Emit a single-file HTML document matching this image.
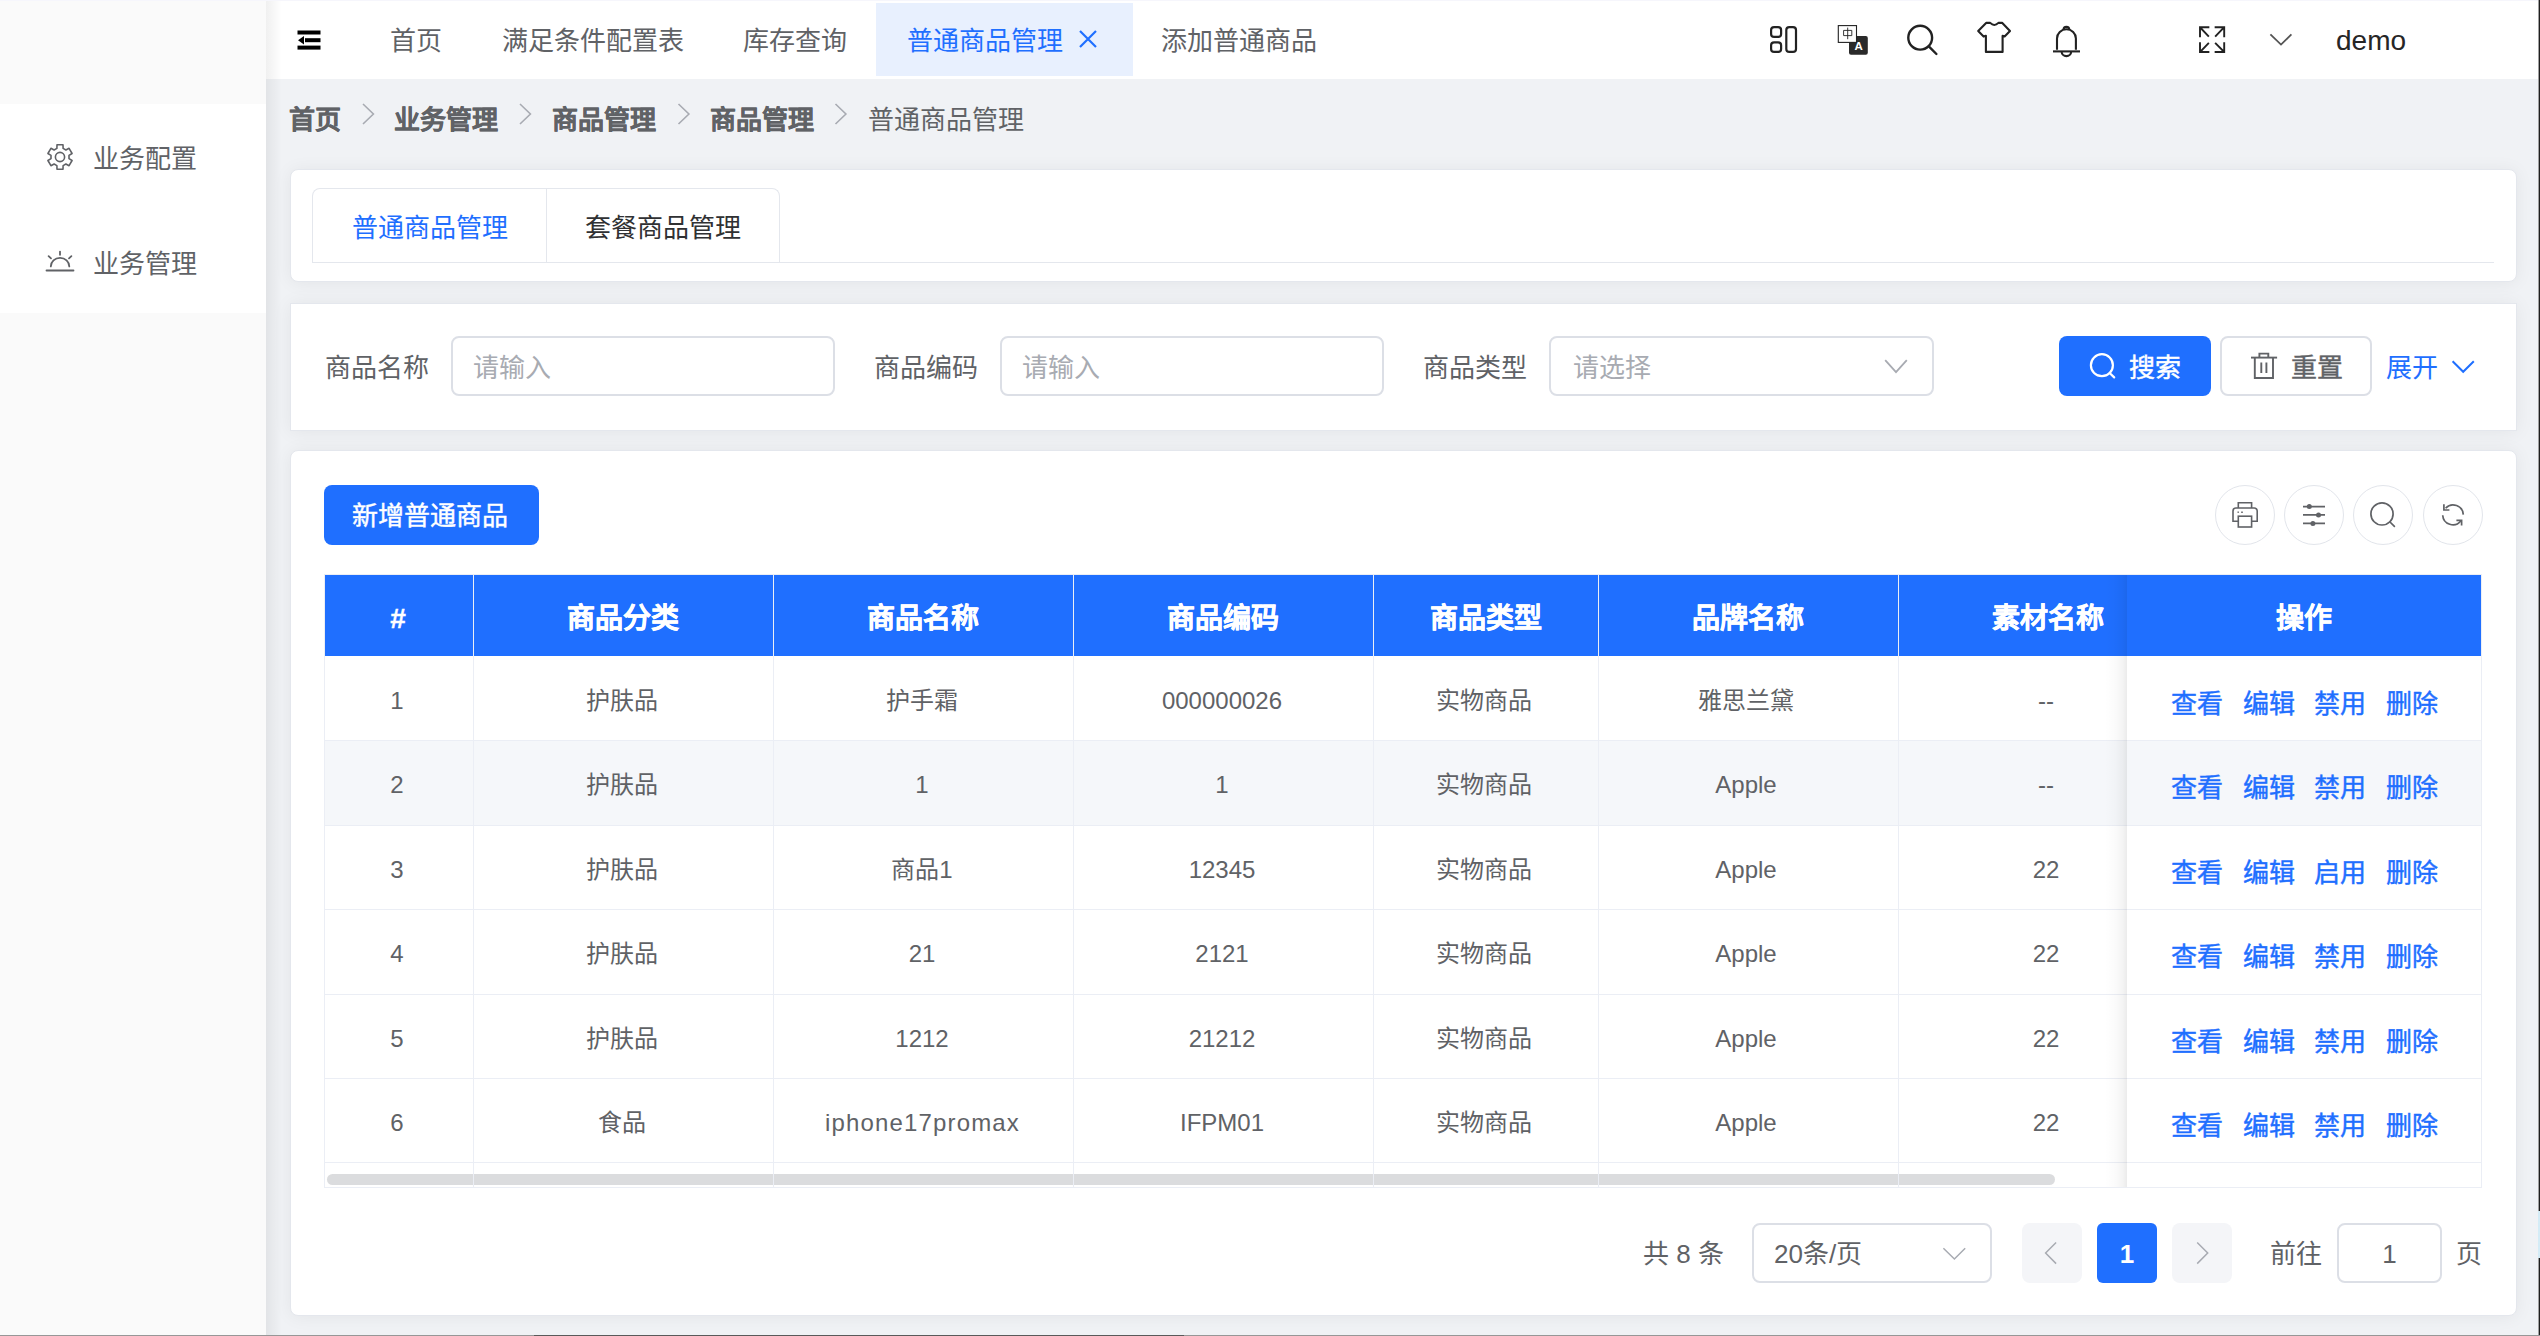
<!DOCTYPE html>
<html lang="zh-CN">
<head>
<meta charset="utf-8">
<style>
*{box-sizing:border-box;margin:0;padding:0}
html,body{width:2540px;height:1336px;overflow:hidden}
body{position:relative;background:#f0f2f5;font-family:"Liberation Sans",sans-serif;color:#606266;font-size:26px}
.abs{position:absolute}
.sidebar{left:0;top:0;width:266px;height:1336px;background:#fafafa}
.menu{left:0;top:104px;width:266px;height:209px;background:#fff}
.mt{position:absolute;left:93px;height:40px;line-height:40px;font-size:26px;color:#606266;white-space:nowrap}
.header{left:266px;top:0;width:2274px;height:79px;background:#fff}
.htab{position:absolute;top:3px;height:76px;line-height:76px;font-size:26px;color:#606266;white-space:nowrap}
.shadowL{left:266px;top:0;width:16px;height:1336px;background:linear-gradient(90deg,rgba(0,0,0,.06),rgba(0,0,0,0))}
.bc{position:absolute;top:98px;height:44px;line-height:44px;font-size:26px;white-space:nowrap;color:#606266}
.card{position:absolute;background:#fff;border:1px solid #e4e7ed;box-shadow:0 1px 18px rgba(0,0,0,.06)}
.t{position:absolute;white-space:nowrap;line-height:40px;height:40px}
.inp{position:absolute;border:2px solid #dcdfe6;border-radius:8px;background:#fff}
.ph{position:absolute;white-space:nowrap;color:#a8abb2;line-height:40px;height:40px}
.btn{position:absolute;border-radius:8px}
.circ{position:absolute;width:60px;height:60px;border:1.5px solid #e2e5eb;border-radius:50%;top:485px}
table.grid{position:absolute;border-collapse:collapse;table-layout:fixed}
.hdr{position:absolute;left:324px;top:575px;width:2158px;height:81px;background:#1f6fff}
.th{position:absolute;top:578px;height:81px;line-height:81px;color:#fff;font-weight:bold;font-size:28px;text-align:center;white-space:nowrap;-webkit-text-stroke:0.4px #fff}
.vl{position:absolute;width:1px;background:#ebeef5}
.hl{position:absolute;height:1px;background:#ebeef5}
.td{position:absolute;height:40px;line-height:40px;text-align:center;white-space:nowrap;font-size:24px;color:#606266}
.lk{position:absolute;height:40px;line-height:40px;white-space:nowrap;font-size:26px;color:#1f6fff;-webkit-text-stroke:0.45px #1f6fff}
</style>
</head>
<body>
<div class="abs sidebar"></div>
<div class="abs menu"></div>
<div class="mt" style="top:139px">业务配置</div>
<div class="mt" style="top:244px">业务管理</div>

<div class="abs header">
  <div class="htab" style="left:124px">首页</div>
  <div class="htab" style="left:236px">满足条件配置表</div>
  <div class="htab" style="left:477px">库存查询</div>
  <div style="position:absolute;left:610px;top:3px;width:257px;height:73px;background:#e8f0fe"></div>
  <div class="htab" style="left:641px;color:#1f6fff">普通商品管理</div>
  <div class="htab" style="left:895px">添加普通商品</div>
  <div class="htab" style="left:2070px;font-size:28px;color:#262626">demo</div>
</div>
<div class="abs shadowL"></div>

<div class="bc" style="left:289px;font-weight:bold;-webkit-text-stroke:0.3px #606266">首页</div>
<div class="bc" style="left:394px;font-weight:bold;-webkit-text-stroke:0.3px #606266">业务管理</div>
<div class="bc" style="left:552px;font-weight:bold;-webkit-text-stroke:0.3px #606266">商品管理</div>
<div class="bc" style="left:710px;font-weight:bold;-webkit-text-stroke:0.3px #606266">商品管理</div>
<div class="bc" style="left:868px">普通商品管理</div>

<!-- card 1: tabs -->
<div class="card" style="left:290px;top:169px;width:2227px;height:113px;border-radius:8px"></div>
<div class="abs" style="left:312px;top:188px;width:468px;height:75px;border:1px solid #e4e7ed;border-bottom:none;border-radius:8px 8px 0 0"></div>
<div class="abs" style="left:546px;top:188px;width:1px;height:75px;background:#e4e7ed"></div>
<div class="abs" style="left:312px;top:262px;width:2182px;height:1px;background:#e4e7ed"></div>
<div class="t" style="left:352px;top:208px;color:#1f6fff">普通商品管理</div>
<div class="t" style="left:585px;top:208px;color:#303133">套餐商品管理</div>

<!-- card 2: search -->
<div class="card" style="left:290px;top:303px;width:2227px;height:128px"></div>
<div class="t" style="left:325px;top:348px">商品名称</div>
<div class="inp" style="left:451px;top:336px;width:384px;height:60px"></div>
<div class="ph" style="left:473px;top:348px">请输入</div>
<div class="t" style="left:874px;top:348px">商品编码</div>
<div class="inp" style="left:1000px;top:336px;width:384px;height:60px"></div>
<div class="ph" style="left:1022px;top:348px">请输入</div>
<div class="t" style="left:1423px;top:348px">商品类型</div>
<div class="inp" style="left:1549px;top:336px;width:385px;height:60px"></div>
<div class="ph" style="left:1573px;top:348px">请选择</div>
<div class="btn" style="left:2059px;top:336px;width:152px;height:60px;background:#1f6fff"></div>
<div class="t" style="left:2129px;top:348px;color:#fff;-webkit-text-stroke:0.45px #fff">搜索</div>
<div class="btn" style="left:2220px;top:336px;width:152px;height:60px;border:2px solid #dcdfe6"></div>
<div class="t" style="left:2291px;top:348px;-webkit-text-stroke:0.45px #606266">重置</div>
<div class="t" style="left:2386px;top:348px;color:#1f6fff">展开</div>

<!-- card 3: table -->
<div class="card" style="left:290px;top:450px;width:2227px;height:866px;border-radius:8px"></div>
<div class="btn" style="left:324px;top:485px;width:215px;height:60px;background:#1f6fff"></div>
<div class="t" style="left:352px;top:496px;color:#fff;-webkit-text-stroke:0.45px #fff">新增普通商品</div>
<div class="circ" style="left:2215px"></div>
<div class="circ" style="left:2284px"></div>
<div class="circ" style="left:2353px"></div>
<div class="circ" style="left:2423px"></div>

<!-- pagination -->
<div class="t" style="left:1643px;top:1234px">共 8 条</div>
<div class="inp" style="left:1752px;top:1223px;width:240px;height:60px"></div>
<div class="t" style="left:1774px;top:1234px">20条/页</div>
<div class="btn" style="left:2022px;top:1223px;width:60px;height:60px;background:#f4f5f8"></div>
<div class="btn" style="left:2097px;top:1223px;width:60px;height:60px;background:#1f6fff;border-radius:6px"></div>
<div class="t" style="left:2097px;top:1234px;width:60px;text-align:center;color:#fff;font-weight:bold">1</div>
<div class="btn" style="left:2172px;top:1223px;width:60px;height:60px;background:#f4f5f8"></div>
<div class="t" style="left:2270px;top:1234px">前往</div>
<div class="inp" style="left:2337px;top:1223px;width:105px;height:60px"></div>
<div class="t" style="left:2337px;top:1234px;width:105px;text-align:center">1</div>
<div class="t" style="left:2456px;top:1234px">页</div>

<!--TBL-->
<div class="hdr"></div>
<div class="abs" style="left:324px;top:741px;width:1803px;height:84px;background:#f5f7fa"></div>
<div class="abs" style="left:2127px;top:741px;width:355px;height:84px;background:#f5f7fa"></div>
<div class="th" style="left:248px;width:300px">#</div>
<div class="th" style="left:473px;width:300px">商品分类</div>
<div class="th" style="left:773px;width:300px">商品名称</div>
<div class="th" style="left:1073px;width:300px">商品编码</div>
<div class="th" style="left:1336px;width:300px">商品类型</div>
<div class="th" style="left:1598px;width:300px">品牌名称</div>
<div class="th" style="left:1898px;width:300px">素材名称</div>
<div class="abs" style="left:327px;top:1174px;width:1728px;height:11px;border-radius:6px;background:rgba(144,147,153,.32)"></div>
<div class="vl" style="left:473px;top:575px;height:81px;background:#ebeef5"></div>
<div class="vl" style="left:773px;top:575px;height:81px;background:#ebeef5"></div>
<div class="vl" style="left:1073px;top:575px;height:81px;background:#ebeef5"></div>
<div class="vl" style="left:1373px;top:575px;height:81px;background:#ebeef5"></div>
<div class="vl" style="left:1598px;top:575px;height:81px;background:#ebeef5"></div>
<div class="vl" style="left:1898px;top:575px;height:81px;background:#ebeef5"></div>
<div class="vl" style="left:473px;top:656px;height:531px"></div>
<div class="vl" style="left:773px;top:656px;height:531px"></div>
<div class="vl" style="left:1073px;top:656px;height:531px"></div>
<div class="vl" style="left:1373px;top:656px;height:531px"></div>
<div class="vl" style="left:1598px;top:656px;height:531px"></div>
<div class="vl" style="left:1898px;top:656px;height:531px"></div>
<div class="hl" style="left:324px;top:740px;width:2158px"></div>
<div class="hl" style="left:324px;top:825px;width:2158px"></div>
<div class="hl" style="left:324px;top:909px;width:2158px"></div>
<div class="hl" style="left:324px;top:994px;width:2158px"></div>
<div class="hl" style="left:324px;top:1078px;width:2158px"></div>
<div class="hl" style="left:324px;top:1162px;width:2158px"></div>
<div class="td" style="left:247px;width:300px;top:681px">1</div>
<div class="td" style="left:472px;width:300px;top:681px">护肤品</div>
<div class="td" style="left:772px;width:300px;top:681px">护手霜</div>
<div class="td" style="left:1072px;width:300px;top:681px">000000026</div>
<div class="td" style="left:1334px;width:300px;top:681px">实物商品</div>
<div class="td" style="left:1596px;width:300px;top:681px">雅思兰黛</div>
<div class="td" style="left:1896px;width:300px;top:681px">--</div>
<div class="lk" style="left:2171px;top:684px">查看</div>
<div class="lk" style="left:2243px;top:684px">编辑</div>
<div class="lk" style="left:2314px;top:684px">禁用</div>
<div class="lk" style="left:2386px;top:684px">删除</div>
<div class="td" style="left:247px;width:300px;top:765px">2</div>
<div class="td" style="left:472px;width:300px;top:765px">护肤品</div>
<div class="td" style="left:772px;width:300px;top:765px">1</div>
<div class="td" style="left:1072px;width:300px;top:765px">1</div>
<div class="td" style="left:1334px;width:300px;top:765px">实物商品</div>
<div class="td" style="left:1596px;width:300px;top:765px">Apple</div>
<div class="td" style="left:1896px;width:300px;top:765px">--</div>
<div class="lk" style="left:2171px;top:768px">查看</div>
<div class="lk" style="left:2243px;top:768px">编辑</div>
<div class="lk" style="left:2314px;top:768px">禁用</div>
<div class="lk" style="left:2386px;top:768px">删除</div>
<div class="td" style="left:247px;width:300px;top:850px">3</div>
<div class="td" style="left:472px;width:300px;top:850px">护肤品</div>
<div class="td" style="left:772px;width:300px;top:850px">商品1</div>
<div class="td" style="left:1072px;width:300px;top:850px">12345</div>
<div class="td" style="left:1334px;width:300px;top:850px">实物商品</div>
<div class="td" style="left:1596px;width:300px;top:850px">Apple</div>
<div class="td" style="left:1896px;width:300px;top:850px">22</div>
<div class="lk" style="left:2171px;top:853px">查看</div>
<div class="lk" style="left:2243px;top:853px">编辑</div>
<div class="lk" style="left:2314px;top:853px">启用</div>
<div class="lk" style="left:2386px;top:853px">删除</div>
<div class="td" style="left:247px;width:300px;top:934px">4</div>
<div class="td" style="left:472px;width:300px;top:934px">护肤品</div>
<div class="td" style="left:772px;width:300px;top:934px">21</div>
<div class="td" style="left:1072px;width:300px;top:934px">2121</div>
<div class="td" style="left:1334px;width:300px;top:934px">实物商品</div>
<div class="td" style="left:1596px;width:300px;top:934px">Apple</div>
<div class="td" style="left:1896px;width:300px;top:934px">22</div>
<div class="lk" style="left:2171px;top:937px">查看</div>
<div class="lk" style="left:2243px;top:937px">编辑</div>
<div class="lk" style="left:2314px;top:937px">禁用</div>
<div class="lk" style="left:2386px;top:937px">删除</div>
<div class="td" style="left:247px;width:300px;top:1019px">5</div>
<div class="td" style="left:472px;width:300px;top:1019px">护肤品</div>
<div class="td" style="left:772px;width:300px;top:1019px">1212</div>
<div class="td" style="left:1072px;width:300px;top:1019px">21212</div>
<div class="td" style="left:1334px;width:300px;top:1019px">实物商品</div>
<div class="td" style="left:1596px;width:300px;top:1019px">Apple</div>
<div class="td" style="left:1896px;width:300px;top:1019px">22</div>
<div class="lk" style="left:2171px;top:1022px">查看</div>
<div class="lk" style="left:2243px;top:1022px">编辑</div>
<div class="lk" style="left:2314px;top:1022px">禁用</div>
<div class="lk" style="left:2386px;top:1022px">删除</div>
<div class="td" style="left:247px;width:300px;top:1103px">6</div>
<div class="td" style="left:472px;width:300px;top:1103px">食品</div>
<div class="td" style="left:772px;width:300px;top:1103px;letter-spacing:1.15px;text-indent:1.15px">iphone17promax</div>
<div class="td" style="left:1072px;width:300px;top:1103px">IFPM01</div>
<div class="td" style="left:1334px;width:300px;top:1103px">实物商品</div>
<div class="td" style="left:1596px;width:300px;top:1103px">Apple</div>
<div class="td" style="left:1896px;width:300px;top:1103px">22</div>
<div class="lk" style="left:2171px;top:1106px">查看</div>
<div class="lk" style="left:2243px;top:1106px">编辑</div>
<div class="lk" style="left:2314px;top:1106px">禁用</div>
<div class="lk" style="left:2386px;top:1106px">删除</div>
<div class="abs" style="left:2105px;top:575px;width:22px;height:612px;background:linear-gradient(90deg,rgba(0,0,0,0),rgba(0,0,0,.015) 45%,rgba(0,0,0,.045) 80%,rgba(0,0,0,.08))"></div>
<div class="abs" style="left:2127px;top:575px;width:355px;height:81px;background:#1f6fff"></div>
<div class="th" style="left:2154px;width:300px">操作</div>
<div class="abs" style="left:324px;top:574px;width:2158px;height:614px;border:1px solid #ebeef5"></div>
<!--/TBL-->
<!--ICONS-->
<svg class="abs" style="left:0;top:0;pointer-events:none" width="2540" height="1336" viewBox="0 0 2540 1336" fill="none">
<!-- sidebar gear -->
<path d="M54.11 150.01 L56.89 148.41 L57.00 144.80 L63.00 144.80 L63.11 148.41 L65.89 150.01 L69.07 148.30 L72.07 153.50 L69.00 155.40 L69.00 158.60 L72.07 160.50 L69.07 165.70 L65.89 163.99 L63.11 165.59 L63.00 169.20 L57.00 169.20 L56.89 165.59 L54.11 163.99 L50.93 165.70 L47.93 160.50 L51.00 158.60 L51.00 155.40 L47.93 153.50 L50.93 148.30 Z" stroke="#606266" stroke-width="1.6" stroke-linejoin="round"/>
<circle cx="60" cy="157" r="4.6" stroke="#606266" stroke-width="1.6"/>
<!-- sidebar sunrise -->
<g stroke="#606266" stroke-width="1.8" stroke-linecap="round">
<path d="M46.5 270.5 H73.5"/>
<path d="M50.8 266.4 A9.25 8.6 0 0 1 69.3 266.4"/>
<path d="M60 251.6 V254.8"/>
<path d="M48.6 256.2 L51 258.4"/>
<path d="M71.4 256.2 L69 258.4"/>
</g>
<!-- hamburger fold -->
<g fill="#000">
<rect x="297.5" y="30.5" width="23" height="4"/>
<rect x="305" y="38.2" width="15.5" height="4"/>
<rect x="297.5" y="45.6" width="23" height="4"/>
<path d="M298 40.2 L304 36 L304 44.4 Z"/>
</g>
<!-- tab close -->
<path d="M1080 31 L1096 47 M1096 31 L1080 47" stroke="#1f6fff" stroke-width="2.2"/>
<!-- header layout icon -->
<g stroke="#222" stroke-width="2.2">
<rect x="1771.1" y="27.1" width="10" height="9.8" rx="3"/>
<rect x="1771.1" y="42.3" width="10" height="9.6" rx="3"/>
<rect x="1786.3" y="27.1" width="9.7" height="24.8" rx="3"/>
</g>
<!-- translate icon -->
<rect x="1849" y="36" width="18.8" height="18.8" rx="2" fill="#2a2a2a"/>
<text x="1858.6" y="49.8" font-family="Liberation Sans" font-size="11.5" font-weight="bold" fill="#fff" text-anchor="middle">A</text>
<rect x="1838.3" y="25.6" width="18.2" height="16.8" fill="#fff" stroke="#222" stroke-width="1.1"/>
<path d="M1843.6 30.4 H1851.8 V35.6 H1843.6 Z M1847.7 27.6 V39.2" stroke="#222" stroke-width="0.9"/>
<!-- search -->
<g stroke="#222" stroke-width="2.4" stroke-linecap="round">
<circle cx="1920.2" cy="37.7" r="11.9"/>
<path d="M1928.8 46.4 L1936.4 54"/>
</g>
<!-- tshirt -->
<path d="M1986.1 22.9 H1990.2 Q1994.3 27.2 1998.4 22.9 H2002.3 L2010 30.9 L2004.6 36.5 L2002.6 35.8 V51.9 H1985.9 V35.8 L1983.6 36.6 L1978.2 31.1 Z" stroke="#222" stroke-width="2.1" stroke-linejoin="round"/>
<!-- bell -->
<g stroke="#222" stroke-width="2.1">
<path d="M2063.5 29.8 A2.9 2.9 0 0 1 2069.3 29.8"/>
<path d="M2057 49.8 V38.5 A9.45 9.2 0 0 1 2075.9 38.5 V49.8"/>
<path d="M2053 51.4 H2080"/>
<path d="M2061.6 51.6 A4.8 4.6 0 0 0 2071.2 51.6"/>
</g>
<!-- fullscreen -->
<g stroke="#222" stroke-width="1.9" stroke-linecap="square">
<path d="M2208.4 27.3 H2200 V36.2 M2200.4 27.7 L2208.2 36"/>
<path d="M2215.6 27.3 H2224.2 V36.2 M2223.8 27.7 L2215.8 36"/>
<path d="M2208.4 52 H2200 V43.3 M2200.4 51.6 L2208.2 43.5"/>
<path d="M2215.6 52 H2224.2 V43.3 M2223.8 51.6 L2215.8 43.5"/>
</g>
<!-- header chevron -->
<path d="M2270.4 34.4 L2281 44.6 L2291.4 34.4" stroke="#555" stroke-width="1.8"/>
<!-- breadcrumb chevrons -->
<g stroke="#a8abb2" stroke-width="1.6">
<path d="M363 104 L373.4 114 L363 124"/>
<path d="M520 104 L530.4 114 L520 124"/>
<path d="M678.5 104 L688.9 114 L678.5 124"/>
<path d="M835.5 104 L845.9 114 L835.5 124"/>
</g>
<!-- select chevron -->
<path d="M1885.2 360.2 L1896 372.2 L1906.8 360.2" stroke="#a8abb2" stroke-width="1.8"/>
<!-- search button icon -->
<g stroke="#fff" stroke-width="2.2" stroke-linecap="round">
<circle cx="2101.9" cy="365.2" r="11"/>
<path d="M2109.6 373 L2114.2 377.4"/>
</g>
<!-- trash -->
<g stroke="#606266" stroke-width="1.9">
<path d="M2251 357.6 H2277.1"/>
<path d="M2259.4 357.4 V353.6 H2268.3 V357.4"/>
<path d="M2254.8 357.6 V378 H2273 V357.6"/>
<path d="M2261.3 362.5 V372.9 M2266.4 362.5 V372.9"/>
</g>
<!-- expand chevron -->
<path d="M2452.6 361.2 L2463.2 371.8 L2473.8 361.2" stroke="#1f6fff" stroke-width="2"/>
<!-- printer -->
<g stroke="#606266" stroke-width="1.6">
<path d="M2238.3 508 V502.8 H2251.6 V508"/>
<path d="M2238.3 521.3 H2233 V511 A3 3 0 0 1 2236 508 H2254.2 A3 3 0 0 1 2257.2 511 V521.3 H2251.6"/>
<rect x="2238.3" y="516.2" width="13.3" height="10.8"/>
</g>
<rect x="2237.5" y="511.5" width="1.4" height="1.4" fill="#606266"/>
<rect x="2241.2" y="511.5" width="1.6" height="1.5" fill="#606266"/>
<!-- sliders -->
<g stroke="#606266" stroke-width="1.6">
<path d="M2303 506.6 H2325 M2303 514.9 H2325 M2303 523.4 H2325"/>
</g>
<g fill="#606266">
<circle cx="2309.3" cy="506.6" r="2.5"/>
<circle cx="2318.5" cy="514.9" r="2.5"/>
<circle cx="2312.9" cy="523.4" r="2.5"/>
</g>
<!-- toolbar search -->
<g stroke="#606266" stroke-width="1.7" stroke-linecap="round">
<circle cx="2382" cy="513.9" r="11.1"/>
<path d="M2390 522 L2394.4 526.4"/>
</g>
<!-- refresh -->
<g stroke="#606266" stroke-width="1.7">
<path d="M2445.6 508.2 A10.2 10.2 0 0 1 2463.3 514.6"/>
<path d="M2443.9 504.3 V510 H2449.4"/>
<path d="M2442.7 515.2 A10.2 10.2 0 0 0 2460.8 521"/>
<path d="M2456.4 520.3 H2461.6 V525.5"/>
</g>
<!-- pagination chevrons -->
<g stroke="#a8abb2" stroke-width="1.5">
<path d="M1943.4 1248.2 L1954.4 1259 L1965.2 1248.2"/>
<path d="M2056.1 1242.5 L2045.6 1253 L2056.1 1263.6"/>
<path d="M2197.2 1242.5 L2207.7 1253 L2197.2 1263.6"/>
</g>
</svg>
<!--/ICONS-->
<!--EDGE-->
<div class="abs" style="left:0;top:0;width:2540px;height:1px;background:#f6f6fc"></div>
<div class="abs" style="left:2538px;top:0;width:1px;height:1336px;background:#a0a0a0"></div>
<div class="abs" style="left:2539px;top:0;width:1px;height:1336px;background:#1e1e1e"></div>
<div class="abs" style="left:2538px;top:1211px;width:2px;height:47px;background:#d4ecf6"></div>
<div class="abs" style="left:0;top:1335px;width:2540px;height:1px;background:#979797"></div>
<div class="abs" style="left:534px;top:1335px;width:650px;height:1px;background:#5a5a5a"></div>
<!--/EDGE-->
</body>
</html>
